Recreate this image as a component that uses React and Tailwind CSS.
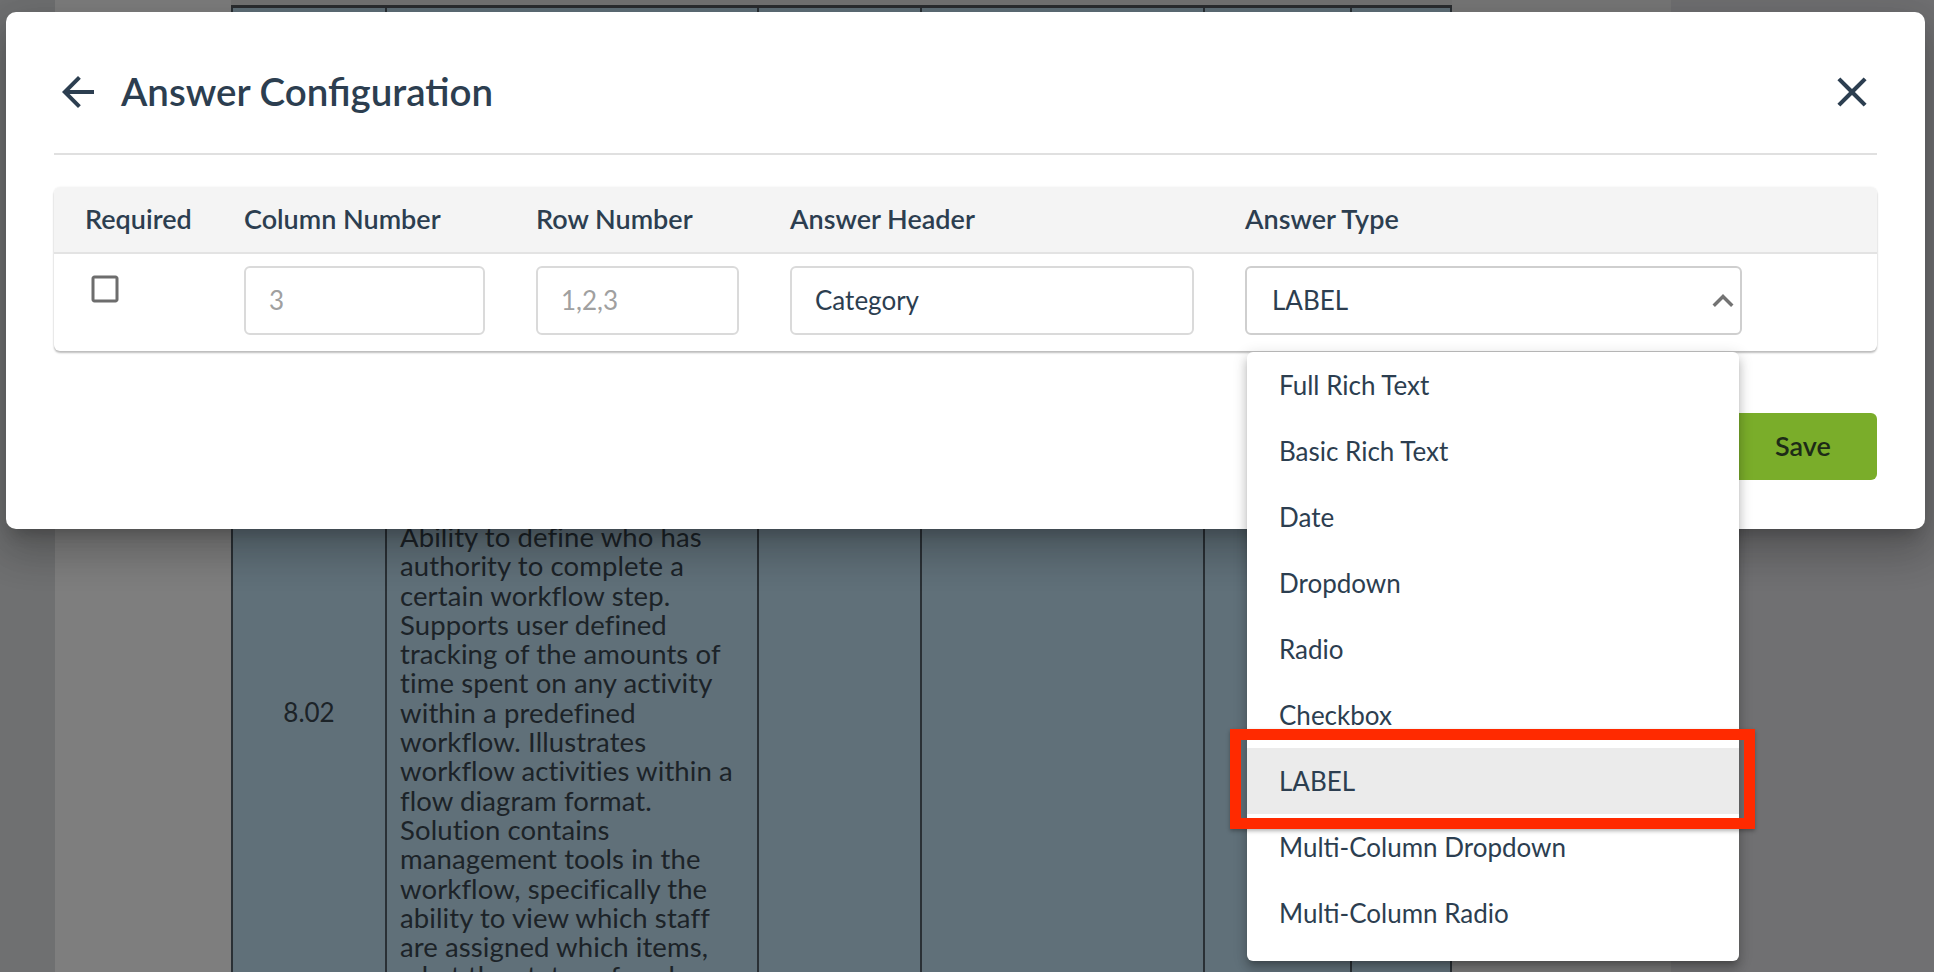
import React from "react";

const ink = "text-[#2c3e50]";

const paragraph = [
  "Ability to define who has",
  "authority to complete a",
  "certain workflow step.",
  "Supports user defined",
  "tracking of the amounts of",
  "time spent on any activity",
  "within a predefined",
  "workflow. Illustrates",
  "workflow activities within a",
  "flow diagram format.",
  "Solution contains",
  "management tools in the",
  "workflow, specifically the",
  "ability to view which staff",
  "are assigned which items,",
  "what the status of each",
];

const answerTypes = [
  "Full Rich Text",
  "Basic Rich Text",
  "Date",
  "Dropdown",
  "Radio",
  "Checkbox",
  "LABEL",
  "Multi-Column Dropdown",
  "Multi-Column Radio",
];

function ArrowBack() {
  return (
    <svg width="48" height="48" viewBox="0 0 24 24" fill="#2c3e50">
      <path d="M20 11H7.83l5.59-5.59L12 4l-8 8 8 8 1.41-1.41L7.83 13H20v-2z" />
    </svg>
  );
}

function CloseIcon() {
  return (
    <svg width="50" height="50" viewBox="0 0 24 24" fill="#2c3e50">
      <path d="M19 6.41L17.59 5 12 10.59 6.41 5 5 6.41 10.59 12 5 17.59 6.41 19 12 13.41 17.59 19 19 17.59 13.41 12z" />
    </svg>
  );
}

function BackgroundPage() {
  // the page behind the dialog, already dimmed by the backdrop
  return (
    <div className="flex h-[972px] w-full">
      <div className="w-[55px] bg-[#6f7071]" />
      <div className="w-[176px] bg-[#7e7e7e]" />
      <div className="w-[1221px] bg-[#747474] pt-[5px]">
        <div className="flex h-full border-t-[3px] border-[#2a2d30] bg-[#607079] text-[#1c2328]">
          <div className="w-[154px] border-l-2 border-[#2a3035] pt-[689px] text-center text-[26px] leading-[30px]">8.02</div>
          <div className="w-[372px] border-l-2 border-[#2a3035] pl-[13px] pt-[514px] text-[27.5px] leading-[29.3px] tracking-[0.1px]">
            {paragraph.map((line) => (
              <div key={line} className="whitespace-nowrap">{line}</div>
            ))}
          </div>
          <div className="w-[163px] border-l-2 border-[#2a3035]" />
          <div className="w-[283px] border-l-2 border-[#2a3035]" />
          <div className="w-[147px] border-l-2 border-[#2a3035]" />
          <div className="w-[102px] border-x-2 border-[#2a3035]" />
        </div>
      </div>
      <div className="w-[219px] bg-[#787878]" />
      <div className="flex-1 bg-[#707072]" />
    </div>
  );
}

function TextBox({ value, placeholder, width }) {
  return (
    <div
      className={`flex h-[69px] items-center rounded-[6px] border-2 border-[#dadada] bg-white pl-[23px] text-[26px] ${width} ${
        value ? ink : "text-[#a0a0a0]"
      }`}
    >
      {value || placeholder}
    </div>
  );
}

function AnswerTable() {
  return (
    <div className="mt-[32px] rounded-[6px] bg-white shadow-[0_2px_2px_rgba(0,0,0,0.25),0_0_2px_rgba(0,0,0,0.08)]">
      <div className={`flex h-[67px] items-center rounded-t-[6px] border-b-2 border-[#e3e3e3] bg-[#f4f4f4] text-[27px] font-semibold ${ink}`}>
        <div className="w-[159px] pl-[31px]">Required</div>
        <div className="w-[292px] pl-[31px]">Column Number</div>
        <div className="w-[254px] pl-[31px]">Row Number</div>
        <div className="w-[455px] pl-[31px]">Answer Header</div>
        <div className="flex-1 pl-[31px]">Answer Type</div>
      </div>
      <div className="flex h-[97px] items-start pt-[12px]">
        <div className="w-[159px] pl-[33px] pt-[5px]">
          <svg width="36" height="36" viewBox="0 0 24 24" fill="#6d6d6d">
            <path d="M19 5v14H5V5h14m0-2H5c-1.11 0-2 .9-2 2v14c0 1.1.89 2 2 2h14c1.1 0 2-.9 2-2V5c0-1.1-.9-2-2-2z" />
          </svg>
        </div>
        <div className="w-[292px] pl-[31px]">
          <TextBox placeholder="3" width="w-[241px]" />
        </div>
        <div className="w-[254px] pl-[31px]">
          <TextBox placeholder="1,2,3" width="w-[203px]" />
        </div>
        <div className="w-[455px] pl-[31px]">
          <TextBox value="Category" width="w-[404px]" />
        </div>
        <div className="flex-1 pl-[31px]">
          <div className={`flex h-[69px] w-[497px] items-center justify-between rounded-[6px] border-2 border-[#cfcfcf] pl-[25px] pr-0 text-[26px] ${ink}`}>
            <span>LABEL</span>
            <svg className="-mr-[4px]" width="42" height="42" viewBox="0 0 24 24" fill="#737373">
              <path d="M7.41 15.41L12 10.83l4.59 4.58L18 14l-6-6-6 6z" />
            </svg>
          </div>
        </div>
      </div>
    </div>
  );
}

export default function App() {
  return (
    <div className="relative h-[972px] w-full overflow-hidden font-[Lato,sans-serif]">
      <BackgroundPage />

      {/* dialog */}
      <div className="absolute left-[6px] top-[12px] w-[1919px] rounded-[10px] bg-white px-[48px] pb-[49px] shadow-[0_11px_15px_-7px_rgba(0,0,0,0.2),0_24px_38px_3px_rgba(0,0,0,0.14),0_9px_46px_8px_rgba(0,0,0,0.12)]">
        <div className="flex h-[141px] items-center justify-between pt-[18px]">
          <div className="flex items-center gap-[19px]">
            <ArrowBack />
            <h1 className={`text-[38.5px] font-semibold ${ink}`}>Answer Configuration</h1>
          </div>
          <CloseIcon />
        </div>
        <div className="h-[2px] bg-[#e0e0e0]" />
        <AnswerTable />
        <div className="mt-[62px] flex justify-end">
          <button className="h-[67px] w-[148px] rounded-[6px] bg-[#7aad2a] text-[27px] font-semibold text-[#1d2b17]">
            Save
          </button>
        </div>
      </div>

      {/* open select menu */}
      <div className="absolute left-[1247px] top-[352px] w-[492px] rounded-[6px] bg-white pb-[15px] shadow-[0_5px_5px_-3px_rgba(0,0,0,0.2),0_8px_10px_1px_rgba(0,0,0,0.14),0_3px_14px_2px_rgba(0,0,0,0.12)]">
        {answerTypes.map((t) => (
          <div
            key={t}
            className={`flex h-[66px] items-center pl-[32px] text-[26px] ${ink} ${t === "LABEL" ? "bg-[#ebebeb]" : ""}`}
          >
            {t}
          </div>
        ))}
      </div>

      {/* annotation box around the selected option */}
      <div className="absolute left-[1230px] top-[729px] h-[100px] w-[525px] border-[11px] border-[#ff2a00] shadow-[0_2px_4px_rgba(0,0,0,0.3)]" />
    </div>
  );
}
